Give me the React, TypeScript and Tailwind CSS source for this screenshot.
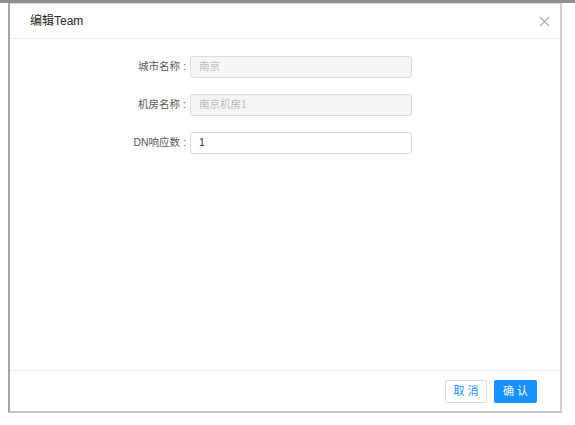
import React from "react";

const FIELDS = [
  { label: "城市名称", value: "南京", disabled: true },
  { label: "机房名称", value: "南京机房1", disabled: true },
  { label: "DN响应数", value: "1", disabled: false },
];

export default function App() {
  return (
    <div
      className="w-[575px] h-[425px] bg-white overflow-hidden"
      style={{ fontFamily: '"Liberation Sans", "Noto Sans CJK SC", sans-serif' }}
    >
      <div className="h-[3px] bg-[#8f8f8f]" />
      {/* dialog */}
      <div className="ml-[8px] w-[554px] h-[410px] flex flex-col bg-white border-t border-t-[#d6d6d6] border-l-2 border-l-[#a3a3a3] border-r-2 border-r-[#cfcfcf] border-b-2 border-b-[#c4c4c4]">
        <div className="h-[35px] flex items-center justify-between pl-[20px] pr-[10px] border-b border-[#ececec]">
          <span className="text-[12px] text-[#262626]">编辑Team</span>
          <svg width="11" height="11" viewBox="0 0 11 11">
            <path d="M1 1 L10 10 M10 1 L1 10" stroke="#a6a6a6" strokeWidth="1.1" />
          </svg>
        </div>

        <div className="flex-1 pt-[17px] flex flex-col gap-[16px]">
          {FIELDS.map((f) => (
            <div key={f.label} className="flex items-center">
              <div className="w-[180px] text-right pr-[4px] text-[10.5px] text-[#595959]">
                {f.label}
                <span className="ml-[3px]">:</span>
              </div>
              <div
                className={`w-[222px] h-[22px] rounded-[3px] border px-[8px] flex items-center text-[10.5px] ${
                  f.disabled
                    ? "bg-[#f5f5f5] border-[#dcdcdc] text-[#bdbdbd]"
                    : "bg-white border-[#d9d9d9] text-[#333333]"
                }`}
              >
                {f.value}
              </div>
            </div>
          ))}
        </div>

        <div className="h-[41px] border-t border-[#ececec] flex items-center justify-end gap-[7px] pr-[23px]">
          <button className="w-[42px] h-[23px] rounded-[2px] border border-[#dcdcdc] bg-white text-[11px] text-[#1890ff] tracking-[3px] pl-[3px]">
            取消
          </button>
          <button className="w-[43px] h-[23px] rounded-[2px] bg-[#1890ff] text-[11px] text-white tracking-[3px] pl-[3px]">
            确认
          </button>
        </div>
      </div>
    </div>
  );
}
